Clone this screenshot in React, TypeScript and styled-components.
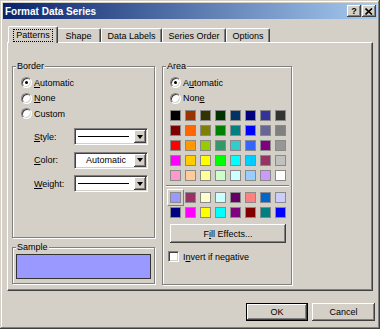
import React from 'react';
import styled, { createGlobalStyle, css } from 'styled-components';

const GlobalStyle = createGlobalStyle`
  html, body {
    margin: 0;
    padding: 0;
    background: #D4D0C8;
  }
  body {
    font-family: "Liberation Sans", Arial, sans-serif;
    font-size: 9px;
    color: #000;
  }
`

const raised = css`
  background: #D4D0C8;
  box-shadow: inset -1px -1px #404040, inset 1px 1px #fff, inset -2px -2px #808080, inset 2px 2px #D4D0C8;
`

const Window = styled.div`
  width: 380px;
  height: 329px;
  box-sizing: border-box;
  padding: 3px;
  background: #D4D0C8;
  box-shadow: inset -1px -1px #404040, inset 1px 1px #D4D0C8, inset -2px -2px #808080, inset 2px 2px #fff;
  display: flex;
  flex-direction: column;
`

const TitleBar = styled.div`
  height: 16px;
  display: flex;
  align-items: center;
  padding: 0 1px 0 2px;
  background: linear-gradient(to right, #0A246A, #A6CAF0);
  color: #fff;
  font-weight: bold;
  font-size: 10px;
`

const CaptionButtons = styled.div`
  margin-left: auto;
  display: flex;
  gap: 1px;
`

const CaptionButton = styled.div`
  ${raised}
  width: 14px;
  height: 12px;
  display: flex;
  align-items: center;
  justify-content: center;
  color: #000;
  font-size: 9px;
  font-weight: bold;
`

const TabStrip = styled.div`
  height: 16px;
  margin: 7px 0 0 7px;
  display: flex;
  align-items: flex-end;
`

const Tab = styled.div<{ $w: number; $active?: boolean }>`
  width: ${p => p.$w}px;
  height: 14px;
  box-sizing: border-box;
  border-top: 1px solid #fff;
  border-left: 1px solid #fff;
  border-right: 1px solid #404040;
  box-shadow: inset -1px 0 #808080;
  border-radius: 2px 2px 0 0;
  display: flex;
  align-items: center;
  justify-content: center;
  background: #D4D0C8;
  ${p => p.$active && css`
    width: ${p.$w + 4}px;
    height: 17px;
    margin: 0 -2px -1px;
    padding-top: 1px;
    position: relative;
    z-index: 2;
  `}
`

const FocusText = styled.span`
  outline: 1px dotted #000;
  padding: 0 2px;
  line-height: 11px;
`

const Panel = styled.div`
  margin-left: 4px;
  width: 366px;
  height: 249px;
  box-sizing: border-box;
  border: 1px solid;
  border-color: #fff #404040 #404040 #fff;
  box-shadow: inset -1px -1px #808080;
  padding: 23px 0 0 4px;
  display: flex;
  gap: 7px;
  position: relative;
  z-index: 1;
`

const Column = styled.div<{ $w: number }>`
  width: ${p => p.$w}px;
  display: flex;
  flex-direction: column;
`

const Group = styled.div<{ $h: number; $pad: string; $gap?: number }>`
  position: relative;
  height: ${p => p.$h}px;
  box-sizing: border-box;
  margin-top: ${p => p.$gap ?? 0}px;
  border: 1px solid #808080;
  box-shadow: 1px 1px 0 #fff, inset 1px 1px 0 #fff;
  padding: ${p => p.$pad};
  display: flex;
  flex-direction: column;
`

const Legend = styled.span`
  position: absolute;
  top: -6px;
  left: 3px;
  padding: 0 1px;
  line-height: 11px;
  background: #D4D0C8;
`

const RadioRow = styled.label`
  display: flex;
  align-items: center;
  height: 15.5px;
  gap: 2px;
`

const Radio = styled.span<{ $checked?: boolean }>`
  width: 11px;
  height: 11px;
  box-sizing: border-box;
  border-radius: 50%;
  border: 1px solid;
  border-color: #808080 #fff #fff #808080;
  box-shadow: inset 1px 1px #404040, inset -1px -1px #D4D0C8;
  background: #fff;
  display: flex;
  align-items: center;
  justify-content: center;
  &::after {
    content: '';
    width: 3px;
    height: 3px;
    border-radius: 50%;
    background: ${p => (p.$checked ? '#000' : 'transparent')};
  }
`

const Fields = styled.div`
  margin-top: 6.5px;
  padding-left: 13px;
  display: flex;
  flex-direction: column;
  gap: 6.5px;
`

const FieldRow = styled.div`
  display: flex;
  align-items: center;
  height: 17px;
`

const FieldLabel = styled.span`
  width: 40px;
`

const Select = styled.div`
  width: 74px;
  height: 17px;
  box-sizing: border-box;
  border: 1px solid;
  border-color: #808080 #fff #fff #808080;
  box-shadow: inset 1px 1px #404040, inset -1px -1px #D4D0C8;
  background: #fff;
  padding: 1px;
  display: flex;
`

const SelectValue = styled.div`
  flex: 1;
  display: flex;
  align-items: center;
  justify-content: center;
  padding-left: 2px;
`

const LineSample = styled.div`
  flex: 1;
  align-self: center;
  height: 1px;
  background: #000;
  margin: 0 5px 0 2px;
`

const DropButton = styled.div`
  ${raised}
  width: 12px;
  display: flex;
  align-items: center;
  justify-content: center;
  &::after {
    content: '';
    border-left: 3.5px solid transparent;
    border-right: 3.5px solid transparent;
    border-top: 4px solid #000;
  }
`

const SampleFill = styled.div`
  width: 135px;
  height: 25px;
  box-sizing: border-box;
  border: 1px solid #333;
  background: #9999FF;
`

const SwatchGrid = styled.div<{ $top: number }>`
  display: grid;
  grid-template-columns: repeat(8, 11px);
  gap: 4px;
  margin-top: ${p => p.$top}px;
`

const Swatch = styled.div<{ $c: string; $sel?: boolean }>`
  width: 11px;
  height: 11px;
  box-sizing: border-box;
  border: 1px solid #8a8a8a;
  background: ${p => p.$c};
  position: relative;
  ${p => p.$sel && css`
    &::before {
      content: '';
      position: absolute;
      inset: -4px;
      border: 1px solid;
      border-color: #fff #808080 #808080 #fff;
    }
  `}
`

const Separator = styled.div`
  margin: 4px 0 0 -4px;
  width: 123px;
  height: 1px;
  background: #808080;
  border-bottom: 1px solid #fff;
`

const ButtonSlot = styled.div`
  margin-top: 6px;
`

const PushButton = styled.button<{ $w: number; $h: number; $default?: boolean }>`
  ${raised}
  width: ${p => p.$w}px;
  height: ${p => p.$h}px;
  box-sizing: border-box;
  border: ${p => (p.$default ? '1px solid #000' : 'none')};
  padding: 0;
  margin: 0;
  font: inherit;
  color: #000;
  display: flex;
  align-items: center;
  justify-content: center;
`

const CheckRow = styled.label`
  display: flex;
  align-items: center;
  gap: 4px;
  margin: 8px 0 0 -2px;
  height: 11px;
`

const CheckBox = styled.span`
  width: 11px;
  height: 11px;
  box-sizing: border-box;
  border: 1px solid;
  border-color: #808080 #fff #fff #808080;
  box-shadow: inset 1px 1px #404040, inset -1px -1px #D4D0C8;
  background: #fff;
`

const Footer = styled.div`
  margin-top: 12px;
  display: flex;
  justify-content: flex-end;
  gap: 4px;
  padding-right: 2px;
`

const tabs = [
  { label: 'Patterns', w: 46 },
  { label: 'Shape', w: 45 },
  { label: 'Data Labels', w: 61 },
  { label: 'Series Order', w: 64 },
  { label: 'Options', w: 44 },
];

const palette = [
  '#000000', '#993300', '#333300', '#003300', '#003366', '#000080', '#333399', '#333333',
  '#800000', '#FF6600', '#808000', '#008000', '#008080', '#0000FF', '#666699', '#808080',
  '#FF0000', '#FF9900', '#99CC00', '#339966', '#33CCCC', '#3366FF', '#800080', '#969696',
  '#FF00FF', '#FFCC00', '#FFFF00', '#00FF00', '#00FFFF', '#00CCFF', '#993366', '#C0C0C0',
  '#FF99CC', '#FFCC99', '#FFFF99', '#CCFFCC', '#CCFFFF', '#99CCFF', '#CC99FF', '#FFFFFF',
];

const chartColors = [
  '#9999FF', '#993366', '#FFFFCC', '#CCFFFF', '#660066', '#FF8080', '#0066CC', '#CCCCFF',
  '#000080', '#FF00FF', '#FFFF00', '#00FFFF', '#800080', '#800000', '#008080', '#0000FF',
];

export default function App() {
  return (
    <>
      <GlobalStyle />
      <Window>
        <TitleBar>
          Format Data Series
          <CaptionButtons>
            <CaptionButton>?</CaptionButton>
            <CaptionButton>
              <svg width="8" height="7" viewBox="0 0 8 7">
                <path d="M0.5 0.5 L7 6.5 M7 0.5 L0.5 6.5" stroke="#000" strokeWidth="1.6" />
              </svg>
            </CaptionButton>
          </CaptionButtons>
        </TitleBar>

        <TabStrip>
          {tabs.map((t, i) => (
            <Tab key={t.label} $w={t.w} $active={i === 0}>
              {i === 0 ? <FocusText>{t.label}</FocusText> : t.label}
            </Tab>
          ))}
        </TabStrip>

        <Panel>
          <Column $w={143}>
            <Group $h={172} $pad="8px 0 0 8px">
              <Legend>Border</Legend>
              <RadioRow><Radio $checked /><span><u>A</u>utomatic</span></RadioRow>
              <RadioRow><Radio /><span><u>N</u>one</span></RadioRow>
              <RadioRow><Radio /><span>Custom</span></RadioRow>
              <Fields>
                <FieldRow>
                  <FieldLabel><u>S</u>tyle:</FieldLabel>
                  <Select><LineSample /><DropButton /></Select>
                </FieldRow>
                <FieldRow>
                  <FieldLabel><u>C</u>olor:</FieldLabel>
                  <Select><SelectValue>Automatic</SelectValue><DropButton /></Select>
                </FieldRow>
                <FieldRow>
                  <FieldLabel><u>W</u>eight:</FieldLabel>
                  <Select><LineSample /><DropButton /></Select>
                </FieldRow>
              </Fields>
            </Group>
            <Group $h={37} $pad="6px 0 0 3px" $gap={9}>
              <Legend>Sample</Legend>
              <SampleFill />
            </Group>
          </Column>

          <Column $w={130}>
            <Group $h={219} $pad="8px 0 0 7px">
              <Legend>Area</Legend>
              <RadioRow><Radio $checked /><span>A<u>u</u>tomatic</span></RadioRow>
              <RadioRow><Radio /><span>Non<u>e</u></span></RadioRow>
              <SwatchGrid $top={4}>
                {palette.map((c, i) => <Swatch key={i} $c={c} />)}
              </SwatchGrid>
              <Separator />
              <SwatchGrid $top={5}>
                {chartColors.map((c, i) => <Swatch key={i} $c={c} $sel={i === 0} />)}
              </SwatchGrid>
              <ButtonSlot>
                <PushButton $w={116} $h={19}>F<u>i</u>ll Effects...</PushButton>
              </ButtonSlot>
              <CheckRow><CheckBox /><span>I<u>n</u>vert if negative</span></CheckRow>
            </Group>
          </Column>
        </Panel>

        <Footer>
          <PushButton $w={62} $h={18} $default>OK</PushButton>
          <PushButton $w={63} $h={18}>Cancel</PushButton>
        </Footer>
      </Window>
    </>
  );
}
